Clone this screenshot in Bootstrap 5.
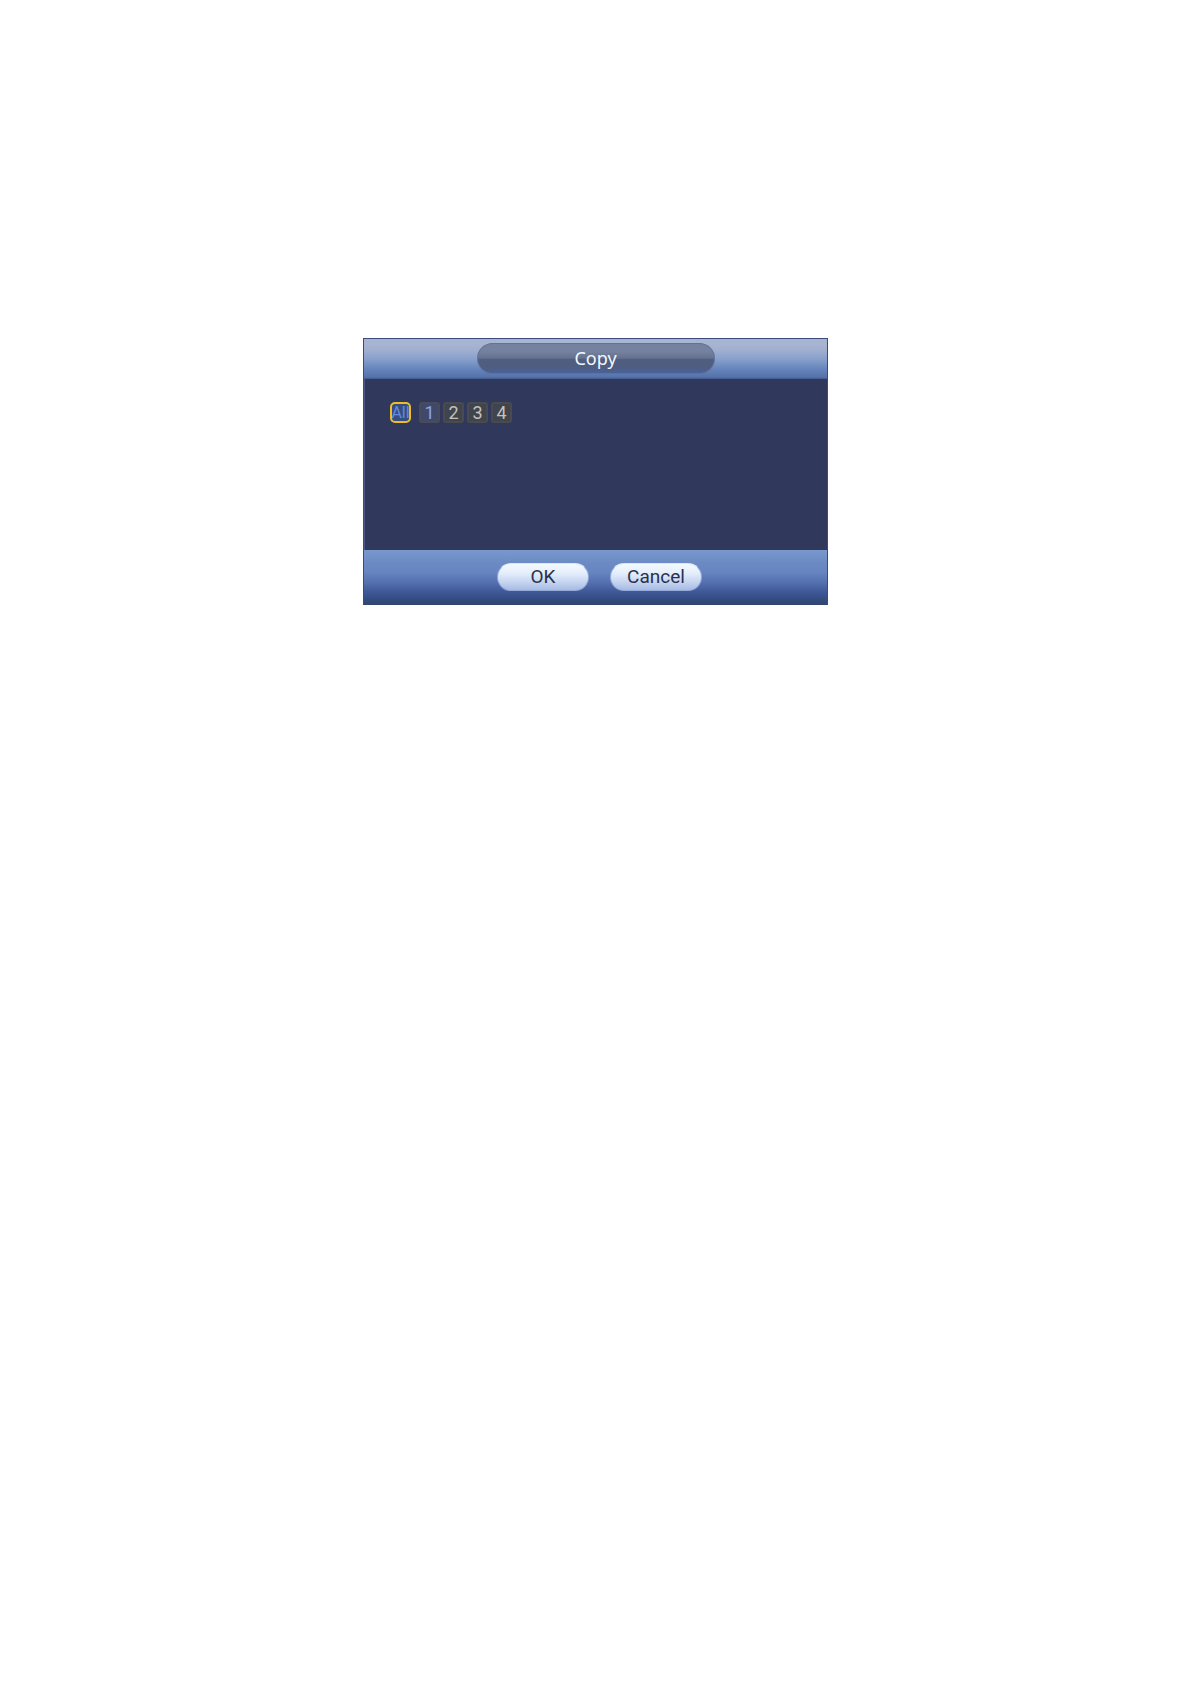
<!DOCTYPE html>
<html lang="en">
<head>
<meta charset="utf-8">
<meta name="viewport" content="width=device-width, initial-scale=1">
<title>Copy</title>
<link href="https://cdn.jsdelivr.net/npm/bootstrap@5.3.0/dist/css/bootstrap.min.css" rel="stylesheet">
<style>
  body { background: #fff; font-family: Roboto, "Liberation Sans", sans-serif; }
  .page { padding-top: 338px; }
  .copy-dialog { max-width: 465px; border: 1px solid #3a4b7c; border-bottom: 0; background: #30395b; }
  .title-bar { height: 40px; padding-bottom: 2px; background: linear-gradient(#a3b5d4 0, #a9b4d0 12%, #a0afd0 28%, #88a0cb 50%, #6684bd 75%, #5674a9 95%, #40578f 100%); }
  .title-pill { width: 238px; height: 31px; border: 1px solid #61719a; border-top-color: #64728f; border-radius: 16px;
    background: linear-gradient(#74829f 0, #75829f 25%, #65728f 49%, #505e80 52%, #4e5d80 78%, #4a629a 100%);
    color: #f2f9ff; font: 400 18px/28px "Noto Sans", sans-serif; }
  .channels { min-height: 171px; padding: 23px 25px; border-left: 1px solid #4a5787; }
  .channel-list { gap: 3px; }
  .channel { width: 21px; height: 21px; padding: 0; border: 2px solid #494b51; border-radius: 3px; background: #40444d; color: #c3c3bc; font-size: 18px; line-height: 17px; }
  .btn-check:checked + .channel, .channel:hover { background: #40496b; color: #8ba4e5; border-color: #494b55; }
  .channel-all, .btn-check:checked + .channel-all, .channel-all:hover { border: 2px solid #edbd29; border-radius: 5px; background: #364e7d; color: #648ae0; font-size: 16px; }
  .actions { height: 55px; gap: 21px; padding: 0 0 2px 8px; background: linear-gradient(#7998ce 0, #6b8ac3 24%, #6785c1 40%, #536fae 60%, #40599a 75%, #344d83 88%, #30466f 100%); }
  .pill-btn { width: 92px; height: 28px; padding: 0; border-radius: 14px; border: 1px solid #93abda; border-top-color: #d8e9fb; font-size: 19px; line-height: 26px; color: #293150;
    background: linear-gradient(#f3f9ff 0, #e4eefb 35%, #c9d8f2 65%, #a9bae3 100%); }
</style>
<script src="https://cdn.jsdelivr.net/npm/bootstrap@5.3.0/dist/js/bootstrap.bundle.min.js" defer></script>
</head>
<body>
<main class="page">
  <form class="copy-dialog mx-auto" role="dialog" aria-labelledby="dialog-title">
    <header class="title-bar d-flex align-items-center justify-content-center">
      <h1 class="title-pill m-0 text-center" id="dialog-title">Copy</h1>
    </header>
    <div class="channels d-flex align-items-start" role="group" aria-label="Channels">
      <input class="btn-check" type="checkbox" id="ch-all" checked>
      <label class="btn channel channel-all d-flex justify-content-center me-2" for="ch-all">All</label>
      <div class="channel-list d-flex">
        <input class="btn-check" type="checkbox" id="ch-1" checked>
        <label class="btn channel" for="ch-1">1</label>
        <input class="btn-check" type="checkbox" id="ch-2">
        <label class="btn channel" for="ch-2">2</label>
        <input class="btn-check" type="checkbox" id="ch-3">
        <label class="btn channel" for="ch-3">3</label>
        <input class="btn-check" type="checkbox" id="ch-4">
        <label class="btn channel" for="ch-4">4</label>
      </div>
    </div>
    <footer class="actions d-flex align-items-center justify-content-center">
      <button class="btn pill-btn" type="button">OK</button>
      <button class="btn pill-btn" type="button">Cancel</button>
    </footer>
  </form>
</main>
</body>
</html>
